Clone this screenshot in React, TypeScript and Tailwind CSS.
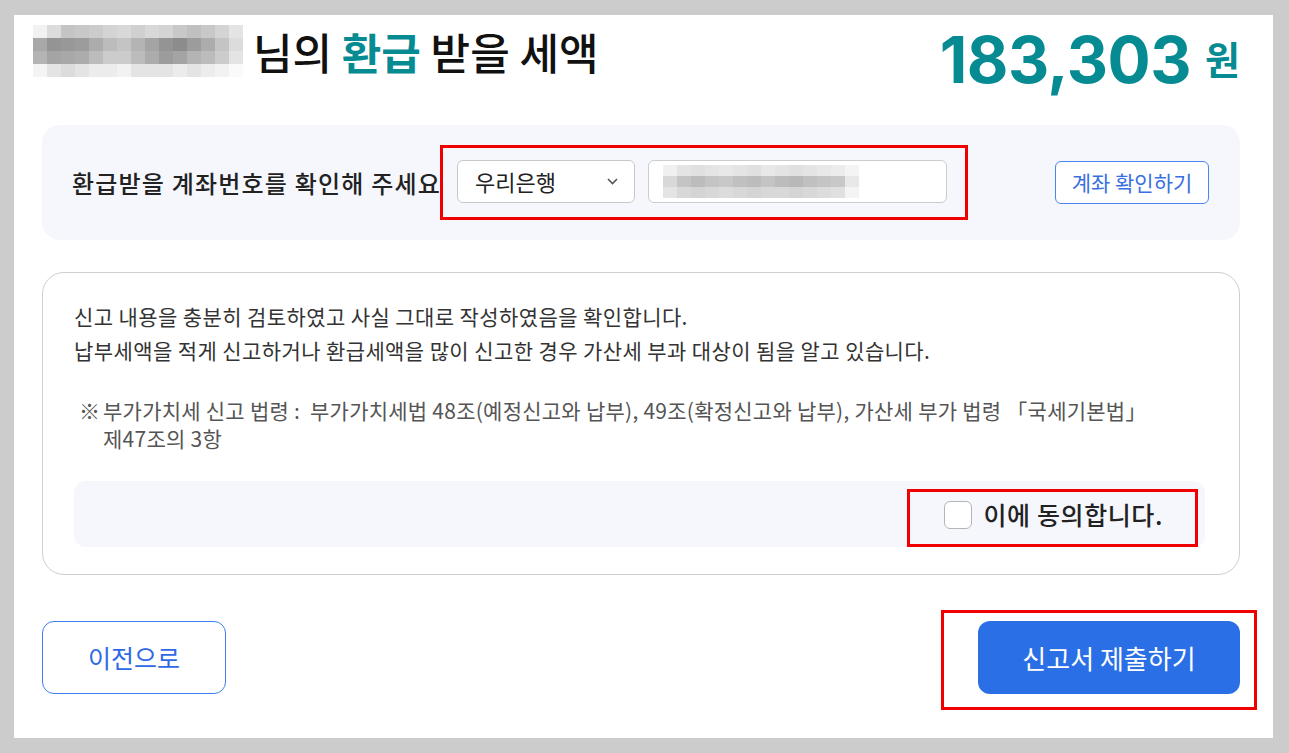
import React from 'react';

// mosaic used to hide the user's name and account number
const NAME_CELLS = [
  [0xf2, 0xdc, 0xc4, 0xc8, 0xcc, 0xd4, 0xd8, 0xd0, 0xd8, 0xd4, 0xc8, 0xc0, 0xc8, 0xd4, 0xe4],
  [0xa8, 0x94, 0x98, 0x9c, 0xac, 0xbc, 0xc4, 0xb4, 0xa4, 0x94, 0x8c, 0x9c, 0xac, 0xc4, 0xdc],
  [0xb4, 0xa4, 0xa8, 0xac, 0xbc, 0xcc, 0xcc, 0xbc, 0xac, 0x9c, 0xa4, 0xb4, 0xbc, 0xcc, 0xe4],
  [0xf4, 0xe4, 0xdc, 0xe4, 0xec, 0xec, 0xf2, 0xe4, 0xe4, 0xe4, 0xec, 0xe4, 0xec, 0xf2, 0xfa],
];

const ACCOUNT_CELLS = [
  [0xf0, 0xe4, 0xe0, 0xe4, 0xe8, 0xe4, 0xe0, 0xe8, 0xe4, 0xe0, 0xe4, 0xe8, 0xec, 0xf4],
  [0xd8, 0xc4, 0xbc, 0xc4, 0xc8, 0xc0, 0xbc, 0xc4, 0xbc, 0xb8, 0xc0, 0xc4, 0xc8, 0xe8],
  [0xe4, 0xd8, 0xd4, 0xd8, 0xdc, 0xd8, 0xd4, 0xd8, 0xd8, 0xd4, 0xd8, 0xdc, 0xe0, 0xf4],
];

function Mosaic({ cells, cw, ch }: { cells: number[][]; cw: number; ch: number }) {
  const w = cells[0].length * cw;
  const h = cells.length * ch;
  return (
    <svg width={w} height={h} viewBox={`0 0 ${w} ${h}`} className="blur-[0.6px]">
      {cells.map((row, r) =>
        row.map((v, c) => (
          <rect key={`${r}-${c}`} x={c * cw} y={r * ch} width={cw} height={ch} fill={`rgb(${v},${v},${v})`} />
        ))
      )}
    </svg>
  );
}

export default function App() {
  return (
    <div className="w-[1289px] h-[753px] bg-[#cccccc] pt-[15px] pl-[14px] font-['Noto_Sans_CJK_KR','Noto_Sans',sans-serif]">
      <div className="w-[1259px] h-[723px] bg-white pl-[28px] pr-[33px]">
        {/* header */}
        <div className="flex justify-between items-start h-[110px]">
          <div className="flex items-center mt-[10px] -ml-[9px]">
            <Mosaic cells={NAME_CELLS} cw={14} ch={13} />
            <h1 className="ml-[10px] text-[43px] leading-[50px] font-medium text-[#111]">
              님의 <span className="text-[#078b93] font-bold">환급</span> 받을 세액
            </h1>
          </div>
          <div className="flex items-center mt-[10px] text-[#078b93]">
            <span className="font-['Inter',sans-serif] text-[64px] leading-[70px] font-bold tracking-[-0.5px]">183,303</span>
            <span className="ml-[14px] -mt-[4px] text-[38px] leading-[50px] font-bold">원</span>
          </div>
        </div>

        {/* account */}
        <div className="flex items-center h-[115px] bg-[#f5f7fd] rounded-[18px] pl-[30px] pr-[31px]">
          <span className="w-[368px] whitespace-nowrap text-[24px] tracking-[1.2px] font-medium text-[#222]">환급받을 계좌번호를 확인해 주세요</span>
          <div className="flex gap-[13px] border-[3px] border-[#f00000] pl-[14px] pr-[18px] pt-[12px] pb-[14px] bg-[#f5f7fd]">
            <div className="flex items-center justify-between w-[178px] h-[43px] bg-white border border-[#c8c8c8] rounded-[6px] pl-[17px] pr-[16px]">
              <span className="text-[22px] text-[#222]">우리은행</span>
              <svg width="11" height="7" viewBox="0 0 11 7" fill="none" stroke="#555" strokeWidth="1.6">
                <path d="M1 1l4.5 4.5L10 1" />
              </svg>
            </div>
            <div className="flex items-center w-[299px] h-[43px] bg-white border border-[#cccccc] rounded-[6px] pl-[14px]">
              <Mosaic cells={ACCOUNT_CELLS} cw={14} ch={11} />
            </div>
          </div>
          <div className="flex-1" />
          <button className="w-[154px] h-[43px] bg-white border border-[#4a86f0] rounded-[6px] text-[21px] text-[#3a6fe0]">
            계좌 확인하기
          </button>
        </div>

        {/* agreement */}
        <div className="mt-[32px] h-[303px] border border-[#cfcfcf] rounded-[22px] pl-[31px] pr-[34px] pt-[26px]">
          <p className="text-[21px] leading-[34px] tracking-[0.4px] text-[#333]">신고 내용을 충분히 검토하였고 사실 그대로 작성하였음을 확인합니다.</p>
          <p className="text-[21px] leading-[34px] tracking-[0.4px] text-[#333]">납부세액을 적게 신고하거나 환급세액을 많이 신고한 경우 가산세 부과 대상이 됨을 알고 있습니다.</p>
          <div className="flex mt-[29px] text-[21px] leading-[28px] tracking-[0.25px] text-[#555]">
            <span className="w-[29px] pl-[5px] shrink-0">※</span>
            <p>
              부가가치세 신고 법령 :&nbsp; 부가가치세법 48조(예정신고와 납부), 49조(확정신고와 납부), 가산세 부가 법령 「국세기본법」
              <br />
              제47조의 3항
            </p>
          </div>
          <div className="flex justify-end mt-[29px] h-[66px] bg-[#f5f7fd] rounded-[12px] pt-[8px] pr-[7px]">
            <label className="flex items-center gap-[12px] h-[58px] border-[3px] border-[#f00000] pl-[34px] pr-[32px] pb-[6px]">
              <span className="w-[28px] h-[28px] bg-white border-[1.5px] border-[#b5b5b5] rounded-[6px]" />
              <span className="text-[25px] tracking-[0.6px] font-medium text-[#222]">이에 동의합니다.</span>
            </label>
          </div>
        </div>

        {/* buttons */}
        <div className="flex justify-between items-start mt-[35px] -mr-[17px]">
          <button className="mt-[11px] w-[184px] h-[73px] bg-white border border-[#3b7ff0] rounded-[12px] text-[25px] text-[#2f6ae6]">
            이전으로
          </button>
          <div className="border-[3px] border-[#f00000] pl-[34px] pr-[14px] pt-[8px] pb-[13px]">
            <button className="w-[262px] h-[73px] bg-[#2a6fe6] rounded-[12px] text-[26px] text-white">
              신고서 제출하기
            </button>
          </div>
        </div>
      </div>
    </div>
  );
}
